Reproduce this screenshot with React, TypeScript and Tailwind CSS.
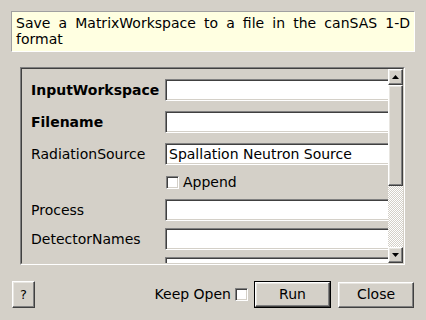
import React from "react";

const raised =
  "border border-t-white border-l-white border-b-[#404040] border-r-[#404040] shadow-[inset_-1px_-1px_0_#808080,inset_1px_1px_0_#e8e6e1]";
const sunken =
  "border border-t-[#808080] border-l-[#808080] border-b-white border-r-white shadow-[inset_1px_1px_0_#404040,inset_-1px_-1px_0_#d4d0c8]";

function Field({ value }: { value?: string }) {
  return (
    <div className={`h-[22px] w-[240px] shrink-0 bg-white ${sunken} flex items-center pl-[3px] text-[14px] text-black whitespace-nowrap`}>
      {value}
    </div>
  );
}

function Row({ label, bold, value, mb }: { label: string; bold?: boolean; value?: string; mb: string }) {
  return (
    <div className={`flex items-center h-[22px] shrink-0 ${mb}`}>
      <div className={`w-[134px] shrink-0 text-[14px] text-black whitespace-nowrap ${bold ? "font-bold" : ""}`}>{label}</div>
      <Field value={value} />
    </div>
  );
}

function Check() {
  return <div className={`w-[13px] h-[13px] bg-white ${sunken}`} />;
}

function Arrow({ up }: { up?: boolean }) {
  return (
    <svg width="7" height="4" viewBox="0 0 7 4">
      {up ? <polygon points="0,4 7,4 3.5,0" fill="#000" /> : <polygon points="0,0 7,0 3.5,4" fill="#000" />}
    </svg>
  );
}

export default function App() {
  return (
    <div className="w-[426px] h-[320px] bg-[#d4d0c8] font-['DejaVu_Sans',sans-serif] flex flex-col overflow-hidden">
      <div className="mx-[11px] mt-[11px] h-[41px] shrink-0 bg-[#ffffe1] border border-t-[#a0a0a0] border-l-[#a0a0a0] border-b-white border-r-white px-[4px] pt-[3px] text-[14px] leading-[16px] text-black text-justify">
        Save a MatrixWorkspace to a file in the canSAS 1-D format
      </div>

      <div className="ml-[20px] mr-[21px] mt-[15px] h-[198px] shrink-0 border border-t-[#808080] border-l-[#808080] border-b-white border-r-white">
        <div className="w-full h-full border border-t-[#404040] border-l-[#404040] border-b-[#d4d0c8] border-r-[#d4d0c8] flex">
          <div className="flex-1 overflow-hidden pl-[9px] pt-[10px] flex flex-col">
            <Row label="InputWorkspace" bold mb="mb-[10px]" />
            <Row label="Filename" bold mb="mb-[10px]" />
            <Row label="RadiationSource" value="Spallation Neutron Source" mb="mb-0" />
            <div className="h-[34px] flex items-center shrink-0">
              <div className="w-[135px] shrink-0" />
              <Check />
              <span className="ml-[4px] text-[14px] text-black">Append</span>
            </div>
            <Row label="Process" mb="mb-[7px]" />
            <Row label="DetectorNames" mb="mb-[7px]" />
            <Row label="" mb="mb-0" />
          </div>
          <div className="w-[15px] shrink-0 flex flex-col">
            <div className={`h-[16px] bg-[#d4d0c8] ${raised} flex items-center justify-center`}>
              <Arrow up />
            </div>
            <div className={`h-[101px] bg-[#d4d0c8] ${raised}`} />
            <div className="flex-1 bg-[repeating-conic-gradient(#d4d0c8_0_25%,#ffffff_0_50%)] bg-[length:2px_2px]" />
            <div className={`h-[16px] bg-[#d4d0c8] ${raised} flex items-center justify-center`}>
              <Arrow />
            </div>
          </div>
        </div>
      </div>

      <div className="mt-[16px] mx-[12px] h-[27px] shrink-0 flex items-center text-[14px] text-black">
        <div className={`w-[23px] h-[27px] ${raised} flex items-center justify-center text-[13px]`}>?</div>
        <div className="flex-1" />
        <span>Keep Open</span>
        <div className="ml-[4px]">
          <Check />
        </div>
        <div className="ml-[6px] w-[77px] h-[27px] border border-black">
          <div className={`w-full h-full ${raised} flex items-center justify-center`}>Run</div>
        </div>
        <div className={`ml-[7px] w-[76px] h-[26px] ${raised} flex items-center justify-center`}>Close</div>
      </div>
    </div>
  );
}
